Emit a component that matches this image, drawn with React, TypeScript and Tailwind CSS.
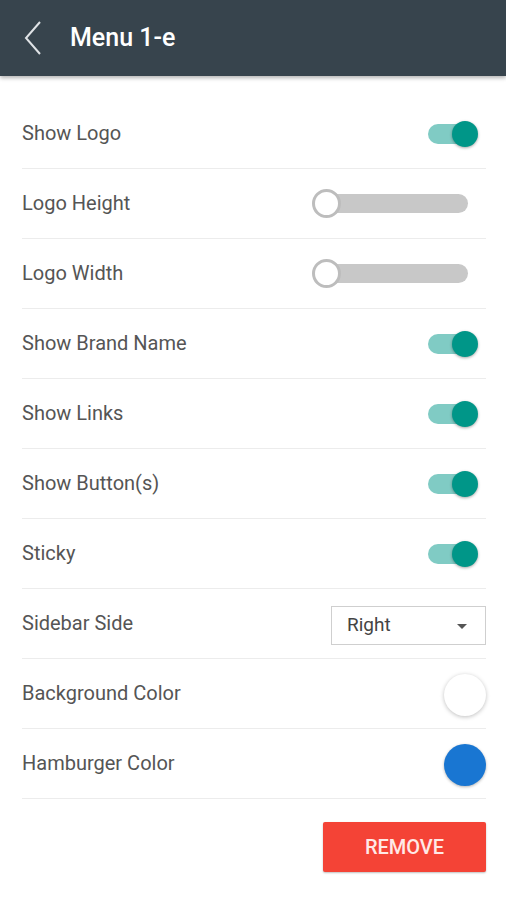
import React from 'react';

type Row =
  | { label: string; kind: 'toggle' }
  | { label: string; kind: 'slider' }
  | { label: string; kind: 'select'; value: string }
  | { label: string; kind: 'color'; color: string };

const rows: Row[] = [
  { label: 'Show Logo', kind: 'toggle' },
  { label: 'Logo Height', kind: 'slider' },
  { label: 'Logo Width', kind: 'slider' },
  { label: 'Show Brand Name', kind: 'toggle' },
  { label: 'Show Links', kind: 'toggle' },
  { label: 'Show Button(s)', kind: 'toggle' },
  { label: 'Sticky', kind: 'toggle' },
  { label: 'Sidebar Side', kind: 'select', value: 'Right' },
  { label: 'Background Color', kind: 'color', color: 'white' },
  { label: 'Hamburger Color', kind: 'color', color: 'blue' },
];

function Toggle() {
  return (
    <div className="relative w-[50px] h-[26px] flex items-center mr-[8px]">
      <div className="w-[44px] h-[20px] rounded-full bg-[#80cbc4]" />
      <div className="absolute right-0 w-[26px] h-[26px] rounded-full bg-[#009688] shadow-[0_1px_3px_rgba(0,0,0,0.35)]" />
    </div>
  );
}

function Slider() {
  return (
    <div className="relative w-[156px] h-[30px] flex items-center mr-[18px]">
      <div className="ml-[2px] w-[154px] h-[19px] rounded-full bg-[#c8c8c8]" />
      <div className="absolute left-0 w-[29px] h-[29px] rounded-full bg-white border-[3px] border-[#bdbdbd]" />
    </div>
  );
}

function Select({ value }: { value: string }) {
  return (
    <div className="mt-[3px] w-[155px] h-[39px] border border-[#cfcfcf] flex items-center justify-between pl-[15px] pr-[17px] text-[19px] text-[#444]">
      <span>{value}</span>
      <svg width="12" height="7" viewBox="0 0 12 7" className="mt-[3px]">
        <path d="M1 1 L6 6 L11 1 Z" fill="#555" />
      </svg>
    </div>
  );
}

function Swatch({ color }: { color: string }) {
  const cls =
    color === 'blue'
      ? 'bg-[#1976d2] shadow-[0_1px_3px_rgba(0,0,0,0.3)]'
      : 'bg-white shadow-[0_1px_4px_rgba(0,0,0,0.25)]';
  return <div className={`mt-[2px] w-[42px] h-[42px] rounded-full ${cls}`} />;
}

export default function App() {
  return (
    <div className="w-[506px] h-[900px] bg-white overflow-hidden" style={{ fontFamily: 'Roboto, "Noto Sans", sans-serif' }}>
      <div className="h-[76px] bg-[#37444d] flex items-center shadow-[0_2px_4px_rgba(0,0,0,0.3)] relative z-10">
        <svg className="ml-[23px]" width="20" height="36" viewBox="0 0 20 36">
          <path d="M17 2 L3 18 L17 34" fill="none" stroke="#dfe3e6" strokeWidth="2" />
        </svg>
        <span className="ml-[27px] text-white text-[25px] font-medium">Menu 1-e</span>
      </div>

      <div className="pt-[23px] px-[22px] pr-[20px]">
        {rows.map((row) => (
          <div key={row.label} className="h-[70px] flex items-center justify-between border-b border-[#ececec]">
            <span className="text-[20px] text-[#555] -mt-[2px]">{row.label}</span>
            {row.kind === 'toggle' && <Toggle />}
            {row.kind === 'slider' && <Slider />}
            {row.kind === 'select' && <Select value={row.value} />}
            {row.kind === 'color' && <Swatch color={row.color} />}
          </div>
        ))}
        <div className="flex justify-end pt-[23px]">
          <button className="w-[163px] h-[50px] bg-[#f44336] text-[#ffe9e6] text-[20px] font-medium rounded-[2px] shadow-[0_1px_2px_rgba(0,0,0,0.25)]">
            REMOVE
          </button>
        </div>
      </div>
    </div>
  );
}
